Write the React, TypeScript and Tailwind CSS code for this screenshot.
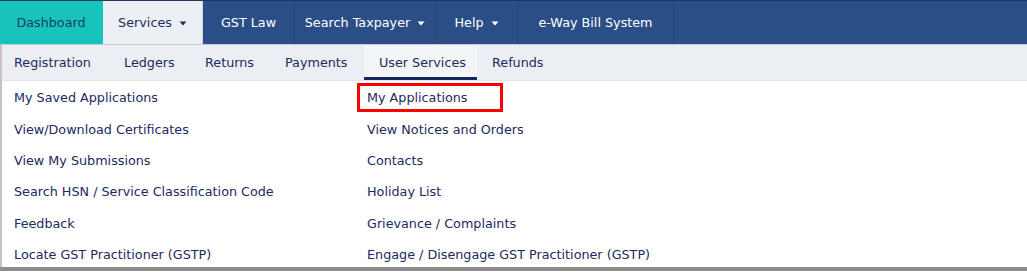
import React from 'react';

type NavItem = { label: string; width: string; caret?: boolean; tone: 'teal' | 'light' | 'dark' };

const navItems: NavItem[] = [
  { label: 'Dashboard', width: 'w-[103px]', tone: 'teal' },
  { label: 'Services', width: 'w-[100px]', caret: true, tone: 'light' },
  { label: 'GST Law', width: 'w-[92px]', tone: 'dark' },
  { label: 'Search Taxpayer', width: 'w-[141px]', caret: true, tone: 'dark' },
  { label: 'Help', width: 'w-[82px]', caret: true, tone: 'dark' },
  { label: 'e-Way Bill System', width: 'w-[156px]', tone: 'dark' },
];

const subTabs = [
  { label: 'Registration', width: 'w-[107px]' },
  { label: 'Ledgers', width: 'w-[81px]' },
  { label: 'Returns', width: 'w-[80px]' },
  { label: 'Payments', width: 'w-[94px]' },
  { label: 'User Services', width: 'w-[113px]', active: true },
  { label: 'Refunds', width: 'w-[85px]' },
];

const leftLinks = [
  'My Saved Applications',
  'View/Download Certificates',
  'View My Submissions',
  'Search HSN / Service Classification Code',
  'Feedback',
  'Locate GST Practitioner (GSTP)',
];

const rightLinks = [
  'My Applications',
  'View Notices and Orders',
  'Contacts',
  'Holiday List',
  'Grievance / Complaints',
  'Engage / Disengage GST Practitioner (GSTP)',
];

const Caret = ({ className }: { className: string }) => (
  <svg width="8" height="5" viewBox="0 0 8 5" className={className}>
    <path d="M0.5 0.5 L7.5 0.5 L4 4.5 Z" fill="currentColor" />
  </svg>
);

const App: React.FC = () => {
  return (
    <div className="w-[1027px] h-[272px] overflow-hidden bg-white text-[12.75px] font-['DejaVu_Sans',sans-serif]">
      {/* Top navigation */}
      <div className="flex h-[44px] border-t border-[#1d3764] bg-[#2c4e86]">
        {navItems.map((item) => (
          <div
            key={item.label}
            className={`${item.width} flex items-center justify-center gap-[7px] border-r ${
              item.tone === 'teal'
                ? 'bg-[#17c4bb] text-[#1d3a68] border-[#17c4bb]'
                : item.tone === 'light'
                ? 'bg-[#eceff3] text-[#1d2d5c] border-[#d5d9de]'
                : 'text-white border-[#274573]'
            }`}
          >
            <span>{item.label}</span>
            {item.caret && <Caret className="mt-[1px]" />}
          </div>
        ))}
      </div>

      {/* Sub navigation + panel */}
      <div className="border-l-2 border-[#c4c4c4]">
        <div className="flex h-[37px] border-t border-[#c8cbcf] border-b border-b-[#e2e4e7] bg-[#ebeff3]">
          {subTabs.map((tab, i) => (
            <div
              key={tab.label}
              className={`${tab.width} flex items-center text-[#1c2a5e] ${
                i === 0 ? 'pl-[12px]' : 'pl-[15px]'
              } ${tab.active ? 'bg-[#f3f4f6] border-b-[3px] border-[#17275a] pt-[3px]' : ''}`}
            >
              {tab.label}
            </div>
          ))}
        </div>

        <div className="grid grid-cols-[351px_1fr] h-[186px] pt-[1px] text-[#1c2a5e]">
          <div className="flex flex-col">
            {leftLinks.map((l) => (
              <div key={l} className="h-[31.4px] flex items-center pl-[12px]">
                {l}
              </div>
            ))}
          </div>
          <div className="flex flex-col">
            {rightLinks.map((l, i) => (
              <div key={l} className="relative h-[31.4px] flex items-center pl-[14px]">
                {l}
                {i === 0 && (
                  <div className="absolute left-[4px] top-[1px] w-[146px] h-[29px] border-[3px] border-[#ff0000]" />
                )}
              </div>
            ))}
          </div>
        </div>
      </div>
      <div className="h-[4px] bg-[#8c8c8c]" />
    </div>
  );
};

export default App;
